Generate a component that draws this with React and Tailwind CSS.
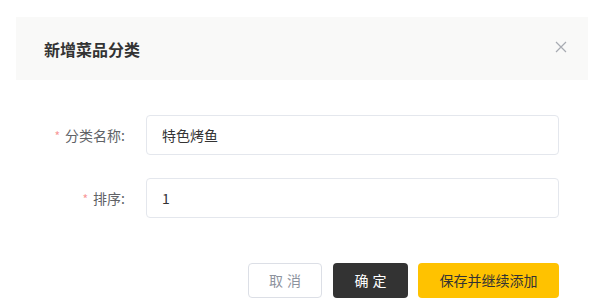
export default function App() {
  const font = { fontFamily: '"Noto Sans CJK SC", "Noto Sans", sans-serif' };
  return (
    <div className="w-[604px] h-[308px] bg-white overflow-hidden" style={font}>
      <div className="ml-[16px] mt-[17px] w-[572px]">
        <div className="h-[63px] bg-[#f9f9f8] flex items-center justify-between pl-[28px] pr-[21px]">
          <span className="text-[16px] font-bold text-[#333333] leading-none">新增菜品分类</span>
          <svg width="12" height="12" viewBox="0 0 12 12" className="mt-[-4px]">
            <path d="M1 1 L11 11 M11 1 L1 11" stroke="#a8abb2" strokeWidth="1.2" fill="none" />
          </svg>
        </div>
        <div className="pt-[35px] pr-[29px]">
          <div className="flex items-center h-[40px]">
            <label className="w-[130px] pr-[21px] text-right text-[14px] text-[#606266] whitespace-nowrap">
              <span className="text-[#f89898] mr-[5px] text-[12px]">*</span>分类名称:
            </label>
            <div className="flex-1 h-[40px] border border-[#e4e7ed] rounded-[4px] flex items-center px-[15px] text-[14px] text-[#333333]">
              特色烤鱼
            </div>
          </div>
          <div className="flex items-center h-[40px] mt-[23px]">
            <label className="w-[130px] pr-[21px] text-right text-[14px] text-[#606266] whitespace-nowrap">
              <span className="text-[#f89898] mr-[5px] text-[12px]">*</span>排序:
            </label>
            <div className="flex-1 h-[40px] border border-[#e4e7ed] rounded-[4px] flex items-center px-[15px] text-[14px] text-[#333333]">
              1
            </div>
          </div>
          <div className="flex justify-end mt-[45px] gap-[10px]">
            <button className="w-[74px] h-[35px] border border-[#dcdfe6] rounded-[4px] bg-white text-[14px] text-[#8d939e] tracking-[4px] pl-[4px] mr-[1px]">取消</button>
            <button className="w-[75px] h-[35px] rounded-[4px] bg-[#333333] text-[14px] text-white tracking-[4px] pl-[4px]">确定</button>
            <button className="w-[141px] h-[35px] rounded-[4px] bg-[#ffc200] text-[14px] text-[#333333]">保存并继续添加</button>
          </div>
        </div>
      </div>
    </div>
  );
}
